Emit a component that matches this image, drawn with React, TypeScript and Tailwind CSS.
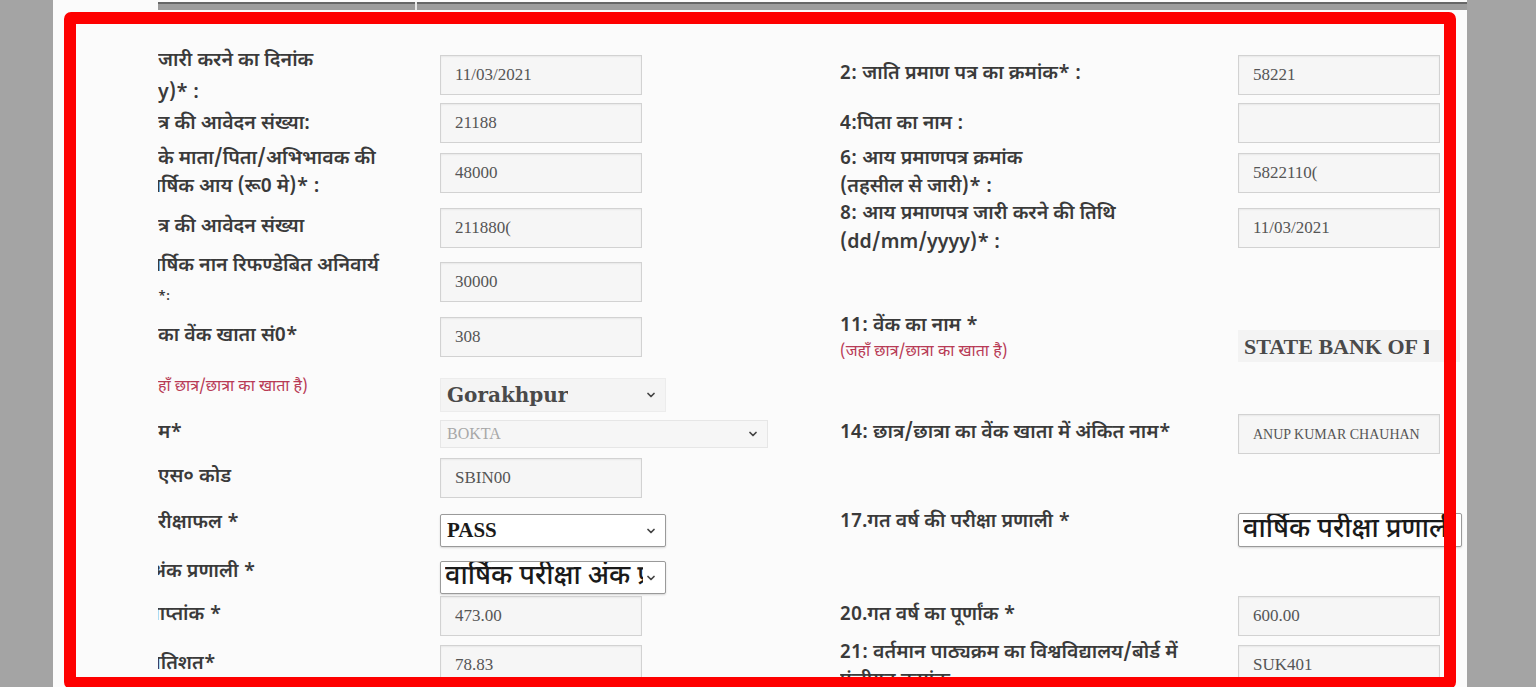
import { ChevronDown } from "lucide-react";

const hindi = "font-['Noto_Sans_Devanagari','Noto_Sans','Noto_Sans_CJK_SC',sans-serif]";
const serif = "font-['Liberation_Serif',serif]";

const TextBox = ({
  value,
  size = "text-[17px] px-[14px]",
}: {
  value?: string;
  size?: string;
}) => (
  <div
    className={`h-full w-[202px] shrink-0 border border-[#d2d2d2] bg-[#f6f6f6] flex items-center shadow-[inset_0_1px_2px_rgba(0,0,0,0.06)] ${serif} ${size} text-[#555] overflow-hidden whitespace-nowrap`}
  >
    {value}
  </div>
);

const Select = ({
  value,
  className = "",
  textClass = "",
}: {
  value: string;
  className?: string;
  textClass?: string;
}) => (
  <div className={`h-full shrink-0 flex items-center justify-between pr-[8px] overflow-hidden ${className}`}>
    <span className={`whitespace-nowrap overflow-hidden ${textClass}`}>{value}</span>
    <ChevronDown className="h-[12px] w-[12px] shrink-0 text-[#444]" strokeWidth={3.5} />
  </div>
);

const Label = ({ children, className = "" }: { children: React.ReactNode; className?: string }) => (
  <div className={`shrink-0 overflow-hidden whitespace-nowrap ${hindi} font-semibold text-[19.5px] text-[#3a3a3a] ${className}`}>
    {children}
  </div>
);

const Note = ({ text, className = "" }: { text: string; className?: string }) => (
  <div className={`${hindi} text-[16px] text-[#b83a55] leading-[24px] ${className}`}>{text}</div>
);

export default function App() {
  return (
    <div className="w-[1536px] h-[687px] bg-[#a4a4a4] overflow-hidden">
      <div className="relative ml-[53px] w-[1414px] h-[687px] bg-[#fbfbfb] overflow-hidden">
        {/* table row above, scrolled away */}
        <div className="ml-[105px] mt-[2px] h-[8px] flex">
          <div className="w-[257px] h-full border-t-[2px] border-[#666] bg-[#9c9c9c]" />
          <div className="w-[2px] h-full bg-[#e8e8e8]" />
          <div className="flex-1 h-full border-t-[2px] border-[#666] bg-[#9c9c9c]" />
        </div>

        <div className="flex pt-[45px] pl-[105px]">
          {/* left column */}
          <div className="w-[682px] shrink-0 flex flex-col">
            <div className="h-[40px] flex items-center">
              <Label className="w-[282px] leading-[32px] mt-[6px]">
                <div>जारी करने का दिनांक</div>
                <div>y)* :</div>
              </Label>
              <TextBox value="11/03/2021" />
            </div>
            <div className="mt-[8px] h-[40px] flex items-center">
              <Label className="w-[282px] mt-[4px]">त्र की आवेदन संख्या:</Label>
              <TextBox value="21188" />
            </div>
            <div className="mt-[10px] h-[40px] flex items-center">
              <Label className="w-[282px] leading-[28px] mt-[2px]">
                <div>के माता/पिता/अभिभावक की</div>
                <div className="-ml-[14px]">वार्षिक आय (रू0 मे)* :</div>
              </Label>
              <TextBox value="48000" />
            </div>
            <div className="mt-[15px] h-[40px] flex items-center">
              <Label className="w-[282px]">त्र की आवेदन संख्या</Label>
              <TextBox value="211880(" />
            </div>
            <div className="mt-[14px] h-[40px] flex items-center">
              <Label className="w-[282px] leading-[30px]">
                <div className="-ml-[14px]">वार्षिक नान रिफण्डेबित अनिवार्य</div>
                <div className="text-[13px]">*:</div>
              </Label>
              <TextBox value="30000" />
            </div>
            <div className="mt-[15px] h-[40px] flex items-center">
              <Label className="w-[282px]">का वेंक खाता सं0*</Label>
              <TextBox value="308" />
            </div>
            <div className="mt-[21px] h-[34px] flex items-center">
              <div className="w-[282px] shrink-0 overflow-hidden mb-[14px]">
                <Note text="हाँ छात्र/छात्रा का खाता है)" className="whitespace-nowrap" />
              </div>
              <Select
                value="Gorakhpur"
                className="w-[226px] pl-[6px] bg-[#f4f4f4] border border-[#ececec]"
                textClass="font-['DejaVu_Serif',serif] font-bold text-[20px] text-[#4a4a4a]"
              />
            </div>
            <div className="mt-[8px] h-[28px] flex items-center">
              <Label className="w-[282px]">म*</Label>
              <Select
                value="BOKTA"
                className="w-[328px] pl-[6px] bg-[#f6f6f6] border border-[#e6e6e6]"
                textClass={`${serif} text-[16px] text-[#a8a8a8]`}
              />
            </div>
            <div className="mt-[10px] h-[40px] flex items-center">
              <Label className="w-[282px]">एस० कोड</Label>
              <TextBox value="SBIN00" />
            </div>
            <div className="mt-[16px] h-[33px] flex items-center">
              <Label className="w-[282px] mb-[14px]">रीक्षाफल *</Label>
              <Select
                value="PASS"
                className="w-[226px] pl-[6px] bg-white border border-[#9a9a9a] rounded-[2px] shadow-[0_1px_2px_rgba(0,0,0,0.15)]"
                textClass={`${serif} font-bold text-[21px] text-[#1a1a1a]`}
              />
            </div>
            <div className="mt-[14px] h-[33px] flex items-center">
              <Label className="w-[282px] mb-[10px]">
                <div className="-ml-[8px]">अंक प्रणाली *</div>
              </Label>
              <Select
                value="वार्षिक परीक्षा अंक प्रणाली"
                className="w-[226px] pl-[4px] bg-white border border-[#9a9a9a] rounded-[2px] shadow-[0_1px_2px_rgba(0,0,0,0.15)]"
                textClass={`${hindi} font-medium text-[27px] leading-[33px] text-[#1a1a1a] w-[198px]`}
              />
            </div>
            <div className="mt-[2px] h-[40px] flex items-center">
              <Label className="w-[282px]">
                <div className="-ml-[10px]">प्राप्तांक *</div>
              </Label>
              <TextBox value="473.00" />
            </div>
            <div className="mt-[9px] h-[40px] flex items-center">
              <Label className="w-[282px]">
                <div className="-ml-[9px]">प्रतिशत*</div>
              </Label>
              <TextBox value="78.83" />
            </div>
          </div>

          {/* right column */}
          <div className="flex-1 flex flex-col">
            <div className="h-[40px] flex items-center">
              <Label className="w-[398px]">2: जाति प्रमाण पत्र का क्रमांक* :</Label>
              <TextBox value="58221" />
            </div>
            <div className="mt-[8px] h-[40px] flex items-center">
              <Label className="w-[398px] mt-[4px]">4:पिता का नाम :</Label>
              <TextBox />
            </div>
            <div className="mt-[10px] h-[40px] flex items-center">
              <Label className="w-[398px] leading-[28px] mt-[2px]">
                <div>6: आय प्रमाणपत्र क्रमांक</div>
                <div>(तहसील से जारी)* :</div>
              </Label>
              <TextBox value="5822110(" />
            </div>
            <div className="mt-[15px] h-[40px] flex items-center">
              <Label className="w-[398px] leading-[29px] mt-[2px]">
                <div>8: आय प्रमाणपत्र जारी करने की तिथि</div>
                <div>(dd/mm/yyyy)* :</div>
              </Label>
              <TextBox value="11/03/2021" />
            </div>
            <div className="mt-[82px] h-[32px] flex items-center">
              <div className="w-[398px] shrink-0 mb-[14px]">
                <Label className="leading-[28px]">11: वेंक का नाम *</Label>
                <Note text="(जहाँ छात्र/छात्रा का खाता है)" />
              </div>
              <div className="h-full w-[222px] shrink-0 bg-[#f3f3f3] pl-[6px] flex items-center">
                <span
                  className={`w-[185px] overflow-hidden whitespace-nowrap ${serif} text-[22px] font-semibold text-[#4a4a4a]`}
                >
                  STATE BANK OF INDIA
                </span>
              </div>
            </div>
            <div className="mt-[52px] h-[40px] flex items-center">
              <Label className="w-[398px]">14: छात्र/छात्रा का वेंक खाता में अंकित नाम*</Label>
              <TextBox value="ANUP KUMAR CHAUHAN" size="text-[14px] px-[14px]" />
            </div>
            <div className="mt-[59px] h-[34px] flex items-center">
              <Label className="w-[398px] mb-[14px]">17.गत वर्ष की परीक्षा प्रणाली *</Label>
              <div className="h-full w-[224px] shrink-0 bg-white border border-[#9a9a9a] rounded-[2px] shadow-[0_1px_2px_rgba(0,0,0,0.15)] pl-[4px] flex items-center">
                <span
                  className={`w-[214px] overflow-hidden whitespace-nowrap ${hindi} font-medium text-[27px] leading-[33px] text-[#1a1a1a]`}
                >
                  वार्षिक परीक्षा प्रणाली
                </span>
              </div>
            </div>
            <div className="mt-[49px] h-[40px] flex items-center">
              <Label className="w-[398px]">20.गत वर्ष का पूर्णांक *</Label>
              <TextBox value="600.00" />
            </div>
            <div className="mt-[9px] h-[40px] flex items-center">
              <Label className="w-[398px] leading-[28px] self-start -mt-[5px]">
                <div>21: वर्तमान पाठ्यक्रम का विश्वविद्यालय/बोर्ड में</div>
                <div>पंजीयन क्रमांक</div>
              </Label>
              <TextBox value="SUK401" />
            </div>
          </div>
        </div>

        {/* red highlight frame drawn over the form */}
        <div className="absolute left-[11px] top-[12px] w-[1392px] h-[677px] border-[12px] border-[#fe0000] rounded-[7px] pointer-events-none" />
      </div>
    </div>
  );
}
